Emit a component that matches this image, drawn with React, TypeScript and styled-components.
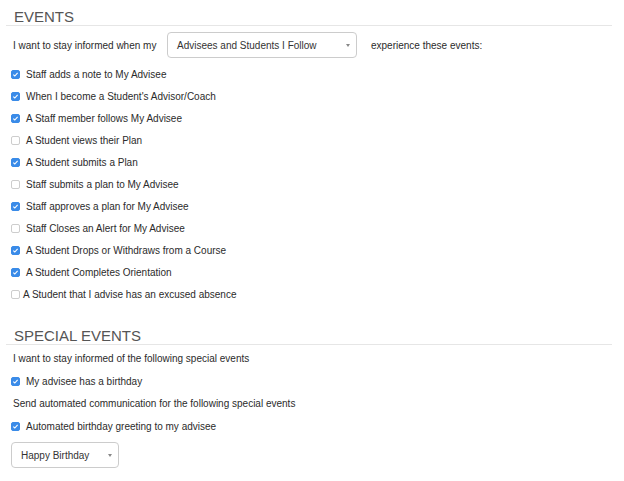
import { createGlobalStyle } from 'styled-components';
import styled from 'styled-components';

const GlobalStyle = createGlobalStyle`
  body {
    margin: 0;
    background: #fff;
    font-family: "Liberation Sans", Arial, Helvetica, sans-serif;
    color: #2b2b2b;
  }
`;

const Page = styled.div`
  width: 606px;
  padding-left: 6px;
`;

const SectionTitle = styled.h2<{ $spaced?: boolean }>`
  margin: ${(p) => (p.$spaced ? '14px' : '0')} 0 0;
  padding: 8px 0 0 8px;
  height: 17px;
  line-height: 17px;
  font-size: 15px;
  font-weight: normal;
  color: #555;
  border-bottom: 1px solid #e6e6e6;
`;

const InformRow = styled.div`
  display: flex;
  align-items: center;
  margin-top: 6px;
  height: 26px;
  padding-left: 7px;
  font-size: 10px;
`;

const InformLabel = styled.span`
  width: 154px;
`;

const Select = styled.div<{ $width: number; $indent?: number }>`
  display: flex;
  align-items: center;
  box-sizing: border-box;
  width: ${(p) => p.$width}px;
  height: 26px;
  margin-left: ${(p) => p.$indent ?? 0}px;
  padding: 0 6px 0 9px;
  border: 1px solid #ccc;
  border-radius: 4px;
  background: #fff;
  font-size: 10px;
  color: #333;
`;

const Arrow = styled.span`
  margin-left: auto;
  width: 0;
  height: 0;
  border-left: 2.5px solid transparent;
  border-right: 2.5px solid transparent;
  border-top: 3px solid #888;
`;

const AfterText = styled.span`
  margin-left: 14px;
`;

const CheckList = styled.div`
  margin-top: 5px;
`;

const CheckRow = styled.label`
  display: flex;
  align-items: center;
  height: 22px;
  padding-left: 5px;
  font-size: 10px;
`;

const Box = styled.span<{ $checked: boolean; $tight?: boolean }>`
  display: inline-flex;
  align-items: center;
  justify-content: center;
  box-sizing: border-box;
  width: 9px;
  height: 9px;
  margin-right: ${(p) => (p.$tight ? '3px' : '6px')};
  border-radius: 2px;
  background: ${(p) => (p.$checked ? '#3a8be8' : '#fff')};
  border: 1px solid ${(p) => (p.$checked ? '#3a8be8' : '#cdcdcd')};
`;

const PlainRow = styled.div<{ $top?: number }>`
  display: flex;
  align-items: center;
  height: 23px;
  margin-top: ${(p) => p.$top ?? 0}px;
  padding-left: 7px;
  font-size: 10px;
`;

const SelectRow = styled.div`
  margin-top: 5px;
`;

function Checkbox({ checked, tight }: { checked: boolean; tight?: boolean }) {
  return (
    <Box $checked={checked} $tight={tight}>
      {checked && (
        <svg width="7" height="7" viewBox="0 0 7 7">
          <polyline points="1.3,3.6 2.8,5 5.6,1.8" fill="none" stroke="#fff" strokeWidth="1.1" />
        </svg>
      )}
    </Box>
  );
}

const events = [
  { label: 'Staff adds a note to My Advisee', checked: true },
  { label: "When I become a Student's Advisor/Coach", checked: true },
  { label: 'A Staff member follows My Advisee', checked: true },
  { label: 'A Student views their Plan', checked: false },
  { label: 'A Student submits a Plan', checked: true },
  { label: 'Staff submits a plan to My Advisee', checked: false },
  { label: 'Staff approves a plan for My Advisee', checked: true },
  { label: 'Staff Closes an Alert for My Advisee', checked: false },
  { label: 'A Student Drops or Withdraws from a Course', checked: true },
  { label: 'A Student Completes Orientation', checked: true },
  { label: 'A Student that I advise has an excused absence', checked: false, tight: true },
];

export default function App() {
  return (
    <>
      <GlobalStyle />
      <Page>
        <SectionTitle>EVENTS</SectionTitle>
        <InformRow>
          <InformLabel>I want to stay informed when my</InformLabel>
          <Select $width={190}>
            Advisees and Students I Follow
            <Arrow />
          </Select>
          <AfterText>experience these events:</AfterText>
        </InformRow>
        <CheckList>
          {events.map((ev) => (
            <CheckRow key={ev.label}>
              <Checkbox checked={ev.checked} tight={ev.tight} />
              {ev.label}
            </CheckRow>
          ))}
        </CheckList>

        <SectionTitle $spaced>SPECIAL EVENTS</SectionTitle>
        <PlainRow $top={2}>I want to stay informed of the following special events</PlainRow>
        <CheckRow>
          <Checkbox checked />
          My advisee has a birthday
        </CheckRow>
        <PlainRow>Send automated communication for the following special events</PlainRow>
        <CheckRow>
          <Checkbox checked />
          Automated birthday greeting to my advisee
        </CheckRow>
        <SelectRow>
          <Select $width={108} $indent={5}>
            Happy Birthday
            <Arrow />
          </Select>
        </SelectRow>
      </Page>
    </>
  );
}
